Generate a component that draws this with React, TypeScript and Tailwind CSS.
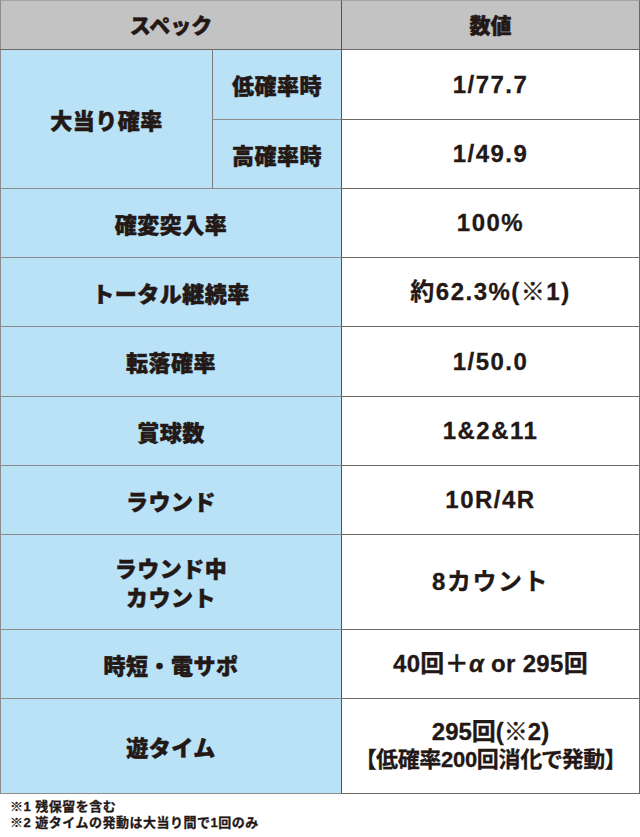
import React from "react";

const jp = "[font-family:'Noto_Sans_CJK_JP',sans-serif]";
const val = "[font-family:'Liberation_Sans','Noto_Sans_CJK_JP',sans-serif]";

const labelBase =
  "flex items-center justify-center text-center bg-[#b9e2f7] border-b border-r border-b-[#8c8c8c] text-[22px] font-black leading-[29px] tracking-[0.5px] text-[#231815] [-webkit-text-stroke:0.5px_#231815] " +
  jp;
const labelWide = labelBase + " col-span-2 border-l border-l-[#8c8c8c] border-r-[#5b5350]";
const valueCell =
  "flex flex-col items-center justify-center text-center bg-white border-b border-r border-b-[#6f6764] border-r-[#6f6764] text-[24px] font-bold leading-[28px] tracking-[1.5px] text-[#231815] [-webkit-text-stroke:0.3px_#231815] " +
  val;

export default function App() {
  return (
    <div className="w-[640px] bg-white">
      <div className="grid grid-cols-[213px_129px_298px] grid-rows-[50px_70px_69px_69px_69px_70px_69px_69px_95px_69px_95px]">
        {/* header */}
        <div
          className={
            "col-span-2 flex items-center justify-center bg-[#c3c3c3] border-t border-l border-b border-r border-t-[#a3a3a3] border-l-[#8c8c8c] border-b-[#6f6764] border-r-[#5b5350] text-[21px] font-black text-[#231815] [-webkit-text-stroke:0.5px_#231815] " +
            jp
          }
        >
          スペック
        </div>
        <div
          className={
            "flex items-center justify-center bg-[#c3c3c3] border-t border-b border-r border-t-[#a3a3a3] border-b-[#6f6764] border-r-[#6f6764] text-[21px] font-black text-[#231815] [-webkit-text-stroke:0.5px_#231815] " +
            jp
          }
        >
          数値
        </div>

        {/* 大当り確率 */}
        <div className={labelBase + " row-span-2 border-l border-l-[#8c8c8c] border-r-[#7c7c7c]"}>大当り確率</div>
        <div className={labelBase + " border-r-[#5b5350]"}>低確率時</div>
        <div className={valueCell}>1/77.7</div>
        <div className={labelBase + " border-r-[#5b5350]"}>高確率時</div>
        <div className={valueCell}>1/49.9</div>

        <div className={labelWide}>確変突入率</div>
        <div className={valueCell}>100%</div>

        <div className={labelWide}>トータル継続率</div>
        <div className={valueCell}>約62.3%(※1)</div>

        <div className={labelWide}>転落確率</div>
        <div className={valueCell}>1/50.0</div>

        <div className={labelWide}>賞球数</div>
        <div className={valueCell}>1&amp;2&amp;11</div>

        <div className={labelWide}>ラウンド</div>
        <div className={valueCell}>10R/4R</div>

        <div className={labelWide + " flex-col"}>
          <span>ラウンド中</span>
          <span>カウント</span>
        </div>
        <div className={valueCell}>8カウント</div>

        <div className={labelWide}>時短・電サポ</div>
        <div className={valueCell}>
          <span className="tracking-[0.3px]">
            40回＋<span className="italic">α</span> or 295回
          </span>
        </div>

        <div className={labelWide}>遊タイム</div>
        <div className={valueCell}>
          <span className="tracking-[0px]">295回(※2)</span>
          <span className="text-[22px] tracking-[-0.3px] [font-feature-settings:'palt']">【低確率200回消化で発動】</span>
        </div>
      </div>
      <div className={"pl-[10px] pt-[5px] text-[13px] leading-[16px] font-bold tracking-[0.5px] text-[#231815] [-webkit-text-stroke:0.3px_#231815] " + val}>
        <div>※1 残保留を含む</div>
        <div>※2 遊タイムの発動は大当り間で1回のみ</div>
      </div>
    </div>
  );
}
